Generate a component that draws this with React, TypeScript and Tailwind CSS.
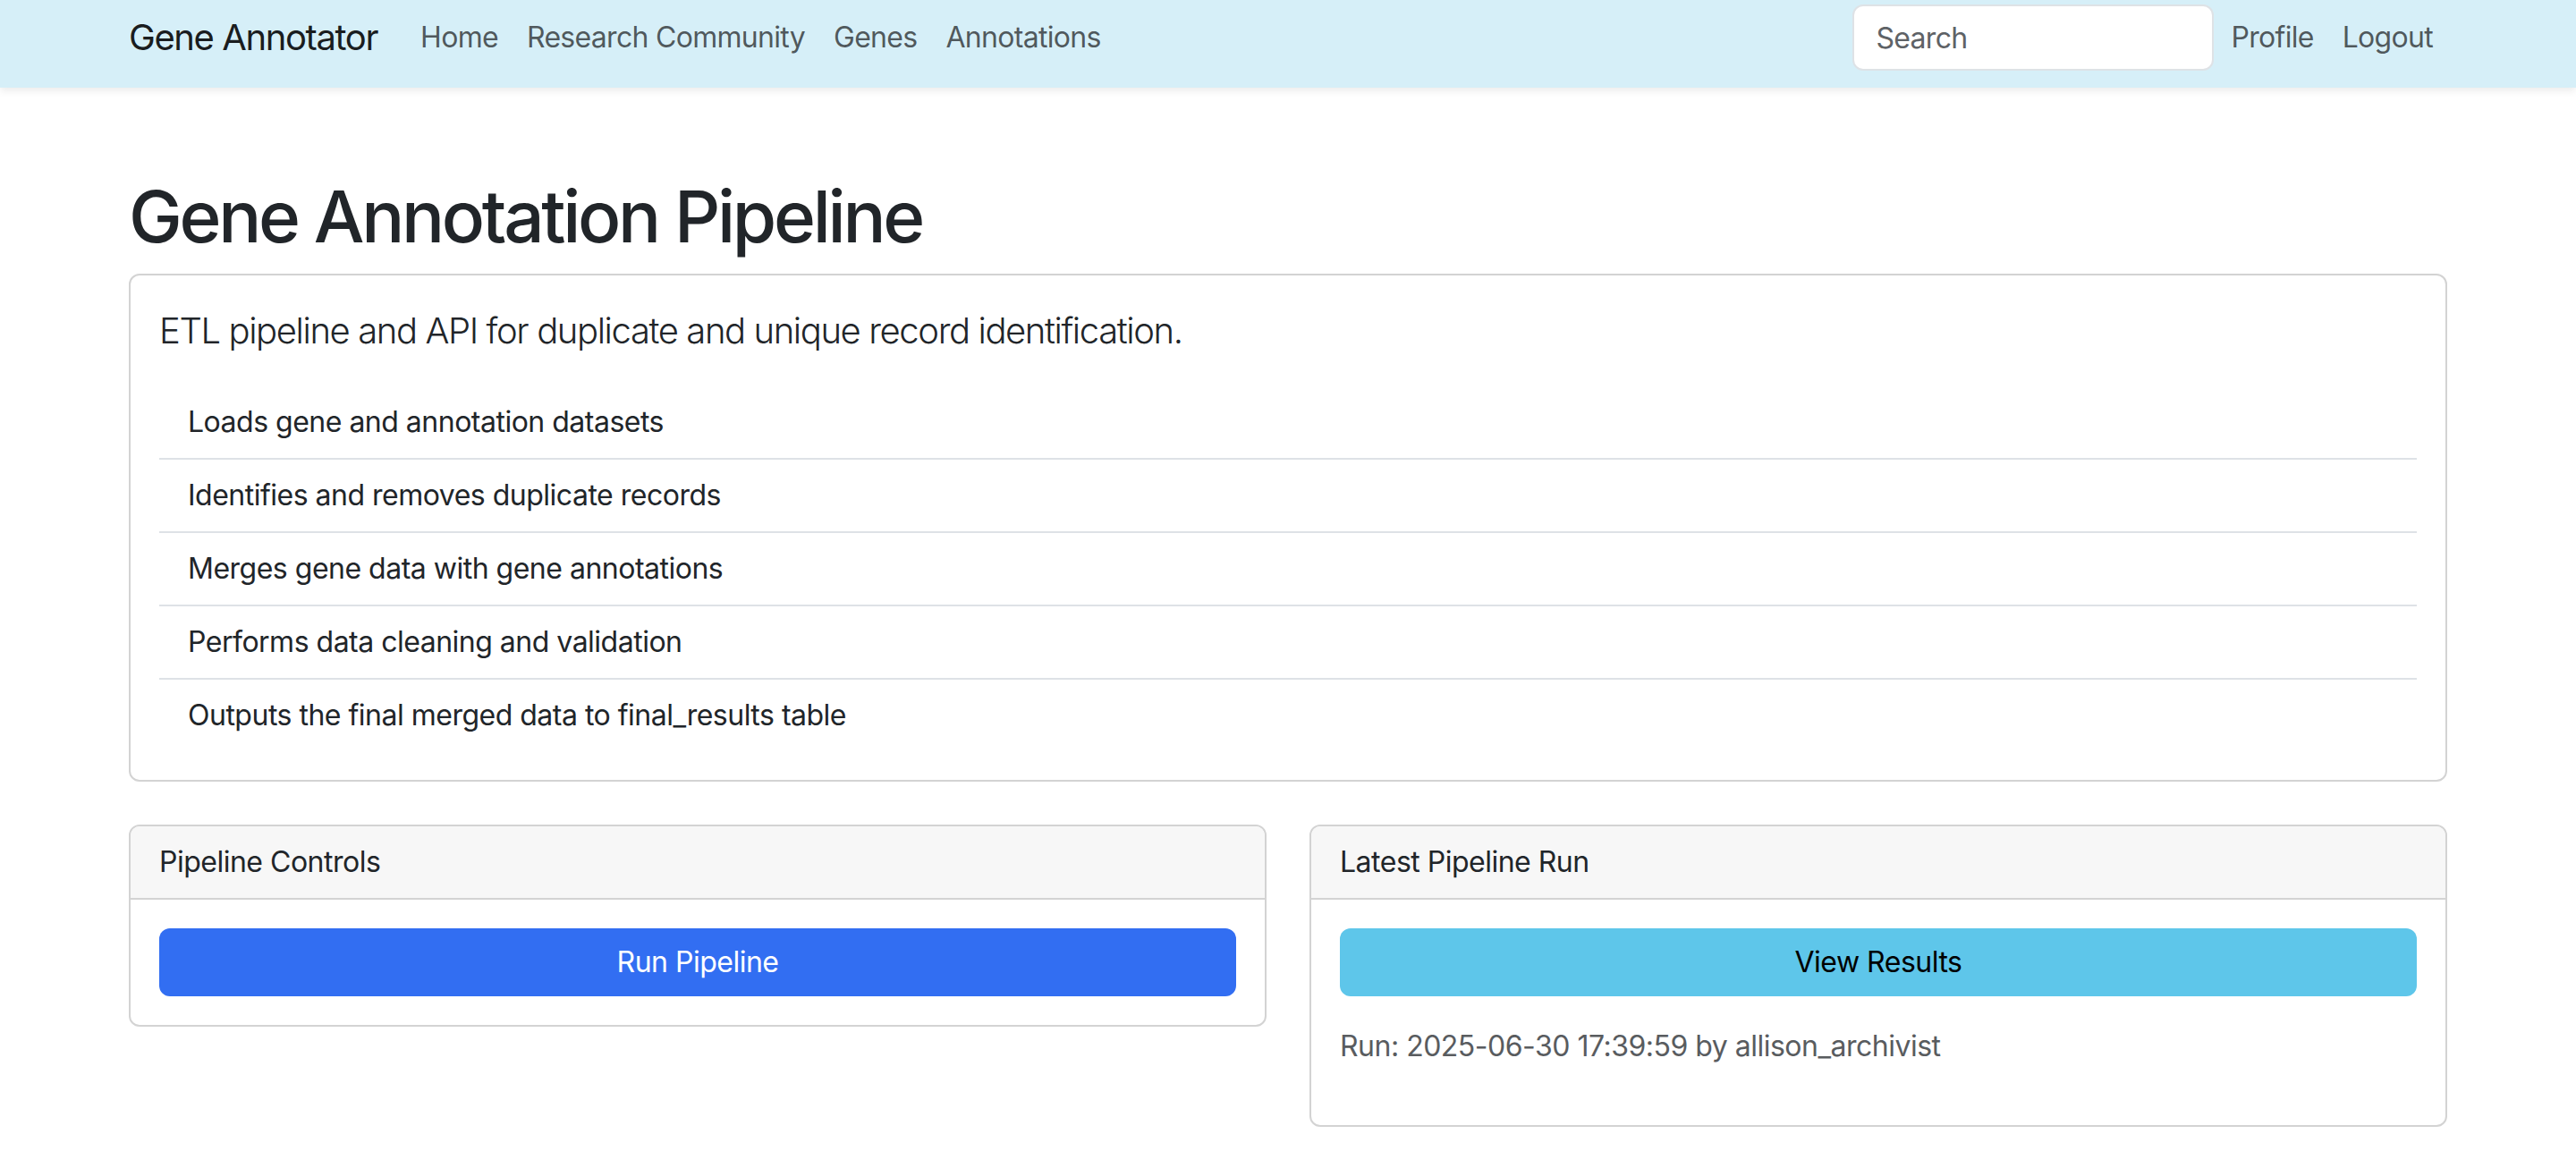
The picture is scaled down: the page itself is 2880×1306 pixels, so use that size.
const steps = [
  'Loads gene and annotation datasets',
  'Identifies and removes duplicate records',
  'Merges gene data with gene annotations',
  'Performs data cleaning and validation',
  'Outputs the final merged data to final_results table',
]

const navLinks = ['Home', 'Research Community', 'Genes', 'Annotations']

function NavBar() {
  return (
    <nav className="h-[98px] bg-[#d6eff8] shadow-[0_4px_8px_rgba(0,0,0,0.075)]">
      <div className="mx-auto flex h-[84px] w-[2640px] items-center px-6">
        <a className="mr-8 text-[40px] leading-[60px] tracking-[-1.4px] text-black/90">Gene Annotator</a>
        <ul className="flex">
          {navLinks.map((link) => (
            <li key={link}>
              <a className="block px-4 text-[32px] leading-[48px] tracking-[-0.7px] text-black/65">{link}</a>
            </li>
          ))}
        </ul>
        <div className="ml-auto flex items-center">
          <input
            type="search"
            placeholder="Search"
            className="mr-[3px] h-[74px] w-[404px] rounded-xl border-2 border-[#dee2e6] bg-white px-6 text-[32px] tracking-[-0.7px] text-[#212529] outline-none placeholder:text-[#5e6266]"
          />
          <a className="px-4 text-[32px] leading-[48px] tracking-[-0.7px] text-black/65">Profile</a>
          <a className="px-4 text-[32px] leading-[48px] tracking-[-0.7px] text-black/65">Logout</a>
        </div>
      </div>
    </nav>
  )
}

function Card({ title, children }: { title: string; children: React.ReactNode }) {
  return (
    <div className="rounded-xl border-2 border-[#d3d3d3] bg-white">
      <div className="rounded-t-[10px] border-b-2 border-[#d3d3d3] bg-[#f7f7f7] px-8 py-4 text-[32px] leading-[48px]">
        {title}
      </div>
      <div className="p-8">{children}</div>
    </div>
  )
}

export default function App() {
  return (
    <div className="min-h-screen bg-white font-['Inter',sans-serif] tracking-[-0.5px] text-[#212529]">
      <NavBar />
      <main className="mx-auto mt-24 w-[2640px] px-6">
        <h1 className="mb-4 text-[80px] font-medium leading-[96px] tracking-[-3.3px]">Gene Annotation Pipeline</h1>

        <div className="rounded-xl border-2 border-[#d3d3d3] p-8">
          <p className="mb-8 text-[40px] font-light leading-[60px] tracking-[-1.4px]">
            ETL pipeline and API for duplicate and unique record identification.
          </p>
          <ul>
            {steps.map((step) => (
              <li
                key={step}
                className="border-b-2 border-[#dee2e6] px-8 py-4 text-[32px] leading-[48px] last:border-b-0">
                {step}
              </li>
            ))}
          </ul>
        </div>

        <div className="mt-12 grid grid-cols-2 items-start gap-12">
          <Card title="Pipeline Controls">
            <button className="h-[76px] w-full rounded-xl bg-[#326ef2] text-[32px] text-white">
              Run Pipeline
            </button>
          </Card>
          <Card title="Latest Pipeline Run">
            <button className="h-[76px] w-full rounded-xl bg-[#5ec6ea] text-[32px] text-black">
              View Results
            </button>
            <p className="my-8 text-[32px] leading-[48px] text-[#595c5f]">
              Run: 2025-06-30 17:39:59 by allison_archivist
            </p>
          </Card>
        </div>
      </main>
    </div>
  )
}
